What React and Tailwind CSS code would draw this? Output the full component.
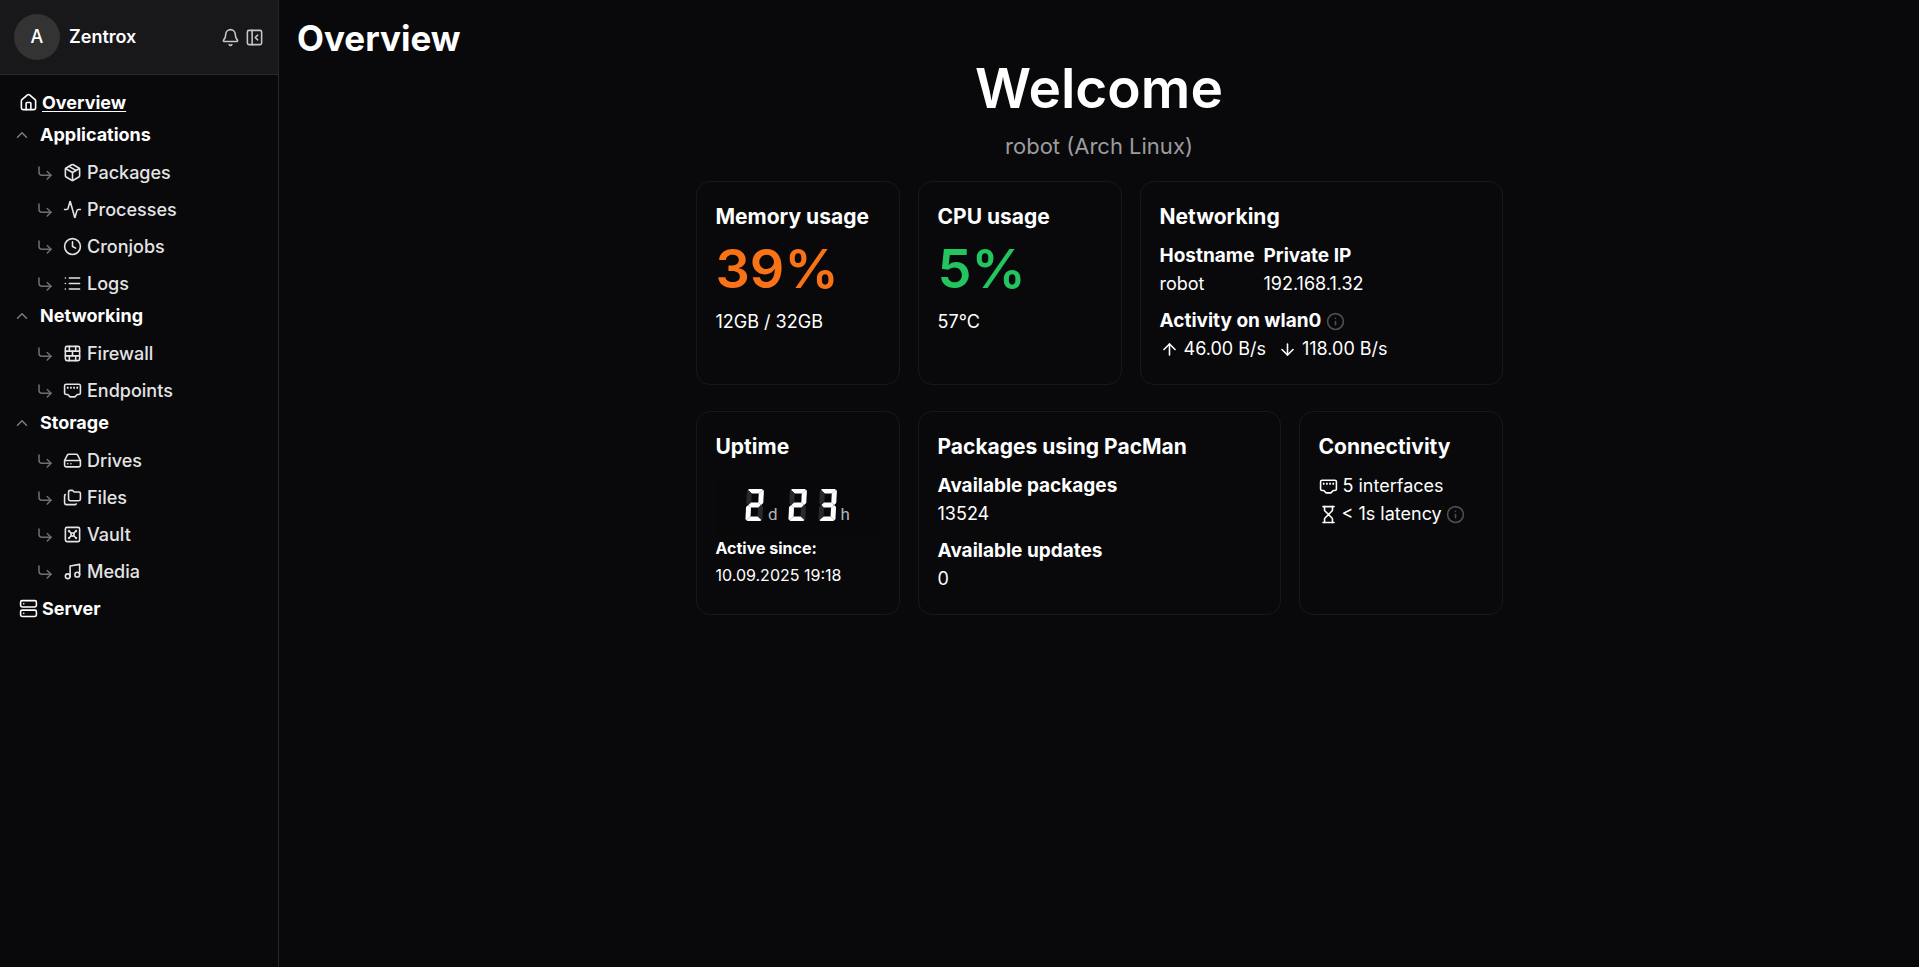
import React from 'react';
import {
  Activity, ArrowDown, ArrowUp, Bell, BrickWall, ChevronUp, Clock, CornerDownRight, EthernetPort,
  Folders, HardDrive, Hourglass, House, Info, List, Music, Package, PanelLeftClose, Server, Vault,
} from 'lucide-react';

const sections = [
  {
    title: 'Applications',
    items: [
      { label: 'Packages', Icon: Package },
      { label: 'Processes', Icon: Activity },
      { label: 'Cronjobs', Icon: Clock },
      { label: 'Logs', Icon: List },
    ],
  },
  {
    title: 'Networking',
    items: [
      { label: 'Firewall', Icon: BrickWall },
      { label: 'Endpoints', Icon: EthernetPort },
    ],
  },
  {
    title: 'Storage',
    items: [
      { label: 'Drives', Icon: HardDrive },
      { label: 'Files', Icon: Folders },
      { label: 'Vault', Icon: Vault },
      { label: 'Media', Icon: Music },
    ],
  },
];

// Segment order: top, upper right, lower right, bottom, lower left, upper left, middle
const segmentShapes = [
  '1,1 2,0 15,0 16,1 12,4.6 5,4.6',
  '16.3,0.8 17,2 17,14 15,15.9 12,13.5 12,4.6',
  '17,30 16.3,31.2 12,27.4 12,18.5 15,16.1 17,18',
  '1,31 2,32 15,32 16,31 12,27.4 5,27.4',
  '0,30 0.7,31.2 5,27.4 5,18.5 2,16.1 0,18',
  '0.7,0.8 0,2 0,14 2,15.9 5,13.5 5,4.6',
  '2.2,16 4.8,13.6 12.2,13.6 14.8,16 12.2,18.4 4.8,18.4',
];

const litSegments = {
  2: [1, 1, 0, 1, 1, 0, 1],
  3: [1, 1, 1, 1, 0, 0, 1],
};

function Digit({ value }) {
  return (
    <svg role="img" aria-label={String(value)} viewBox="0 0 19 32" className="h-8 w-[19px]">
      <g transform="translate(2 0) skewX(-3)">
        {segmentShapes.map((points, i) => {
          const color = litSegments[value][i] ? '#ffffff' : '#29292b';
          return <polygon key={points} points={points} fill={color} />;
        })}
      </g>
    </svg>
  );
}

function Card({ title, className, children }) {
  return (
    <section className={`h-[204px] rounded-[14px] border border-[#18181a] px-[19px] pt-[19px] ${className}`}>
      <h2 className="text-[21px] leading-8 font-bold">{title}</h2>
      {children}
    </section>
  );
}

function Stat({ label, children }) {
  return (
    <div>
      <dt className="text-[19px] font-bold">{label}</dt>
      <dd>{children}</dd>
    </div>
  );
}

function Sidebar() {
  return (
    <aside className="w-[279px] shrink-0 border-r border-[#27272a]">
      <div className="flex items-center border-b border-[#27272a] bg-[#18181a] p-[14px]">
        <span className="flex size-[46px] items-center justify-center rounded-full bg-[#333333] font-medium">A</span>
        <span className="ml-[9px] grow font-semibold">Zentrox</span>
        <button type="button" aria-label="Notifications" className="mr-[5px] text-[#c5c5c6]"><Bell size={19} /></button>
        <button type="button" aria-label="Collapse sidebar" className="text-[#c5c5c6]"><PanelLeftClose size={19} /></button>
      </div>
      <nav className="pt-[9px]">
        <a href="#overview" className="flex h-[37px] items-center gap-1 pl-[19px] font-bold">
          <House size={19} />
          <span className="underline underline-offset-2">Overview</span>
        </a>
        {sections.map(({ title, items }) => (
          <div key={title}>
            <button type="button" aria-expanded="true" className="mb-[5px] flex h-7 w-full items-center gap-[9px] pl-[13px] font-bold">
              <ChevronUp size={18} className="text-[#7c7c7e]" />
              {title}
            </button>
            <ul>
              {items.map(({ label, Icon }) => (
                <li key={label}>
                  <a href={`#${label.toLowerCase()}`} className="flex h-[37px] items-center gap-[5px] pl-9 font-medium text-[#e4e4e5]">
                    <CornerDownRight size={18} className="mr-1 text-[#707072]" />
                    <Icon size={19} />
                    {label}
                  </a>
                </li>
              ))}
            </ul>
          </div>
        ))}
        <a href="#server" className="flex h-[37px] items-center gap-1 pl-[19px] font-bold">
          <Server size={19} />
          Server
        </a>
      </nav>
    </aside>
  );
}

export default function App() {
  return (
    <div className="flex min-h-screen bg-[#09090b] font-['Inter','Liberation_Sans',sans-serif] text-[18px] leading-7 text-white">
      <Sidebar />
      <main className="min-w-0 grow">
        <h1 className="pt-[18px] pl-[18px] text-[35px] leading-10 font-bold">Overview</h1>
        <header className="text-center">
          <p className="text-[55px] leading-[60px] font-semibold">Welcome</p>
          <p className="pt-[10px] text-[22px] leading-9 text-[#9c9c9d]">robot (Arch Linux)</p>
        </header>
        <div className="mt-[17px] flex flex-col items-center gap-[26px]">
          <div className="flex gap-[18px]">
            <Card title="Memory usage" className="w-[204px]">
              <p className="mb-[3px] text-[54px] leading-[72px] font-semibold text-[#f97316]">39%</p>
              <p>12GB / 32GB</p>
            </Card>
            <Card title="CPU usage" className="w-[204px]">
              <p className="mb-[3px] text-[54px] leading-[72px] font-semibold text-[#22c55e]">5%</p>
              <p>57°C</p>
            </Card>
            <Card title="Networking" className="w-[363px]">
              <dl className="mt-[9px] flex gap-[9px]">
                <Stat label="Hostname">robot</Stat>
                <Stat label="Private IP">192.168.1.32</Stat>
              </dl>
              <dl className="mt-[9px]">
                <Stat label={<span className="flex items-center gap-[5px]">Activity on wlan0 <Info size={19} className="text-[#4f4f51]" /></span>}>
                  <span className="flex items-center">
                    <ArrowUp size={19} className="mr-[5px]" />46.00 B/s
                    <ArrowDown size={19} className="mr-[5px] ml-3" />118.00 B/s
                  </span>
                </Stat>
              </dl>
            </Card>
          </div>
          <div className="flex gap-[18px]">
            <Card title="Uptime" className="w-[204px]">
              <div className="mt-[11px] flex h-[61px] items-center justify-center rounded-md bg-[#08080a]">
                <div className="flex items-end">
                  <Digit value={2} />
                  <span className="mr-[5px] ml-1 font-['Roboto',sans-serif] text-[17px] leading-[14px] text-[#b4b4b5]">d</span>
                  <span className="ml-[5px] flex gap-[11px]">
                    <Digit value={2} />
                    <Digit value={3} />
                  </span>
                  <span className="ml-1 font-['Roboto',sans-serif] text-[17px] leading-[14px] text-[#b4b4b5]">h</span>
                </div>
              </div>
              <p className="text-[16px] leading-[27px] font-bold">Active since:</p>
              <p className="text-[16px] leading-[27px]">10.09.2025 19:18</p>
            </Card>
            <Card title="Packages using PacMan" className="w-[363px]">
              <dl className="mt-[9px] flex flex-col gap-[9px]">
                <Stat label="Available packages">13524</Stat>
                <Stat label="Available updates">0</Stat>
              </dl>
            </Card>
            <Card title="Connectivity" className="w-[204px]">
              <ul className="mt-[9px]">
                <li className="flex items-center gap-[5px]"><EthernetPort size={19} />5 interfaces</li>
                <li className="flex items-center gap-1"><Hourglass size={19} />&lt; 1s latency <Info size={19} className="text-[#4f4f51]" /></li>
              </ul>
            </Card>
          </div>
        </div>
      </main>
    </div>
  );
}
